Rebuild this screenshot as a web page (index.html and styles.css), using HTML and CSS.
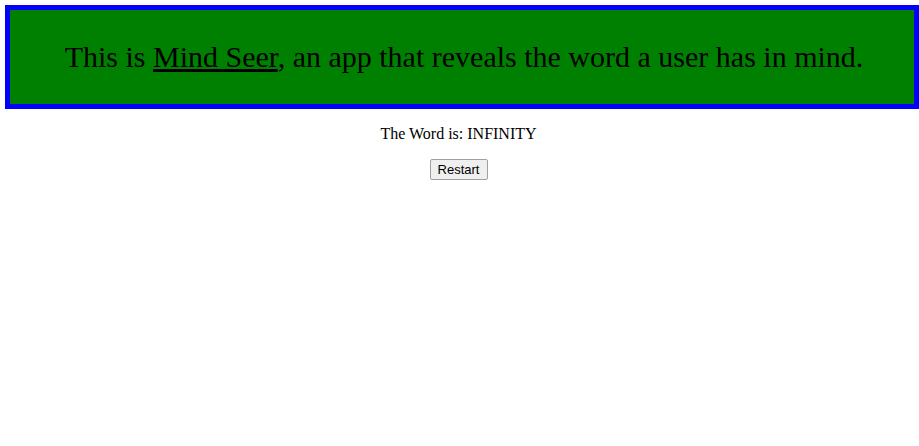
FILE: index.html
```html
<!DOCTYPE html>
<html>
<head>
<meta charset="utf-8">
<link rel="stylesheet" href="styles.css">
</head>
<body>
<div class="banner">
  <p class="banner-text">This is <u>Mind Seer</u>, an app that reveals the word a user has in mind.</p>
</div>
<div class="result">
  <p class="word">The Word is: INFINITY</p>
  <button class="restart">Restart</button>
</div>
</body>
</html>
```
FILE: styles.css
```css
html, body {
  margin: 0;
  padding: 0;
  background: #fff;
}
body {
  font-family: "Liberation Serif", "Times New Roman", serif;
  font-size: 16px;
  color: #000;
  padding: 5px 0 0 5px;
}
.banner {
  box-sizing: border-box;
  width: 914px;
  height: 104px;
  border: 5px solid #0000ff;
  background: #008000;
  display: flex;
  align-items: center;
  justify-content: center;
  padding-left: 4px;
}
.banner-text {
  margin: 0;
  font-size: 30px;
  text-align: center;
}
.result {
  text-align: center;
  padding-right: 7px;
}
.word {
  margin: 16px 0;
  line-height: 18px;
}
.restart {
  font-family: "Liberation Sans", Arial, sans-serif;
  font-size: 13px;
  padding: 1px 6px;
  width: 58px;
  border: 1px solid #a0a0a0;
  border-radius: 2px;
  background: #efefef;
  color: #000;
  height: 21px;
}
```
